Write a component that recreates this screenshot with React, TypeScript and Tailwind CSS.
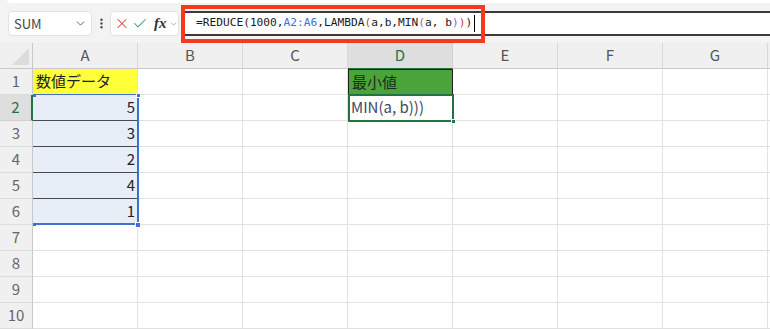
import React from 'react';
import { ChevronDown, X, Check, EllipsisVertical } from 'lucide-react';

const COLS = ['A', 'B', 'C', 'D', 'E', 'F', 'G'];
const ROWS = [1, 2, 3, 4, 5, 6, 7, 8, 9, 10];

const formula: [string, string][] = [
  ['=REDUCE(1000,', '#1a1a1a'],
  ['A2:A6', '#3b6fd4'],
  [',LAMBDA', '#1a1a1a'],
  ['(', '#b0463a'],
  ['a,b,MIN', '#1a1a1a'],
  ['(', '#9a55c4'],
  ['a, b', '#1a1a1a'],
  [')', '#9a55c4'],
  [')', '#b0463a'],
  [')', '#1a1a1a'],
];

const values: Record<number, string> = { 2: '5', 3: '3', 4: '2', 5: '4', 6: '1' };

function Toolbar() {
  return (
    <div className="relative h-[43px] bg-[#f3f3f3]">
      <div className="h-[3px] ml-[7px] bg-white rounded-bl-[4px]" />
      <div className="flex items-start pt-[8px]">
        <div className="ml-[8px] w-[84px] h-[25px] bg-white rounded-[4px] border border-[#e3e3e3] flex items-center justify-between pl-[5px] pr-[4px]">
          <span className="text-[13px] text-[#444]">SUM</span>
          <ChevronDown size={13} strokeWidth={1.6} className="text-[#555]" />
        </div>
        <div className="w-[18px] h-[25px] flex items-center justify-center">
          <EllipsisVertical size={13} strokeWidth={2.4} className="text-[#444]" />
        </div>
        <div className="w-[69px] h-[25px] bg-white rounded-[4px] border border-[#e3e3e3] flex items-center pl-[3px] gap-[2px]">
          <X size={17} strokeWidth={1.5} className="text-[#e0413a]" />
          <Check size={17} strokeWidth={1.5} className="text-[#3c9a5c]" />
          <span className="ml-[4px] text-[15px] italic font-bold text-[#333] leading-none" style={{ fontFamily: '"Liberation Serif", serif' }}>
            fx
          </span>
          <ChevronDown size={10} strokeWidth={1.6} className="text-[#888]" />
        </div>
        <div className="ml-[2px] flex-1 h-[25px] bg-white border-y-2 border-[#3a3a3a] flex items-center pl-[15px]">
          <span className="text-[11.2px] whitespace-pre" style={{ fontFamily: '"DejaVu Sans Mono", monospace' }}>
            {formula.map(([t, c], i) => (
              <span key={i} style={{ color: c }}>{t}</span>
            ))}
          </span>
          <span className="ml-[2px] w-[1px] h-[17px] bg-black" />
        </div>
      </div>
      {/* red annotation box */}
      <div className="absolute left-[181px] top-[5px] w-[304px] h-[38px] border-[4px] border-[#f5391f] pointer-events-none" />
    </div>
  );
}

function Sheet() {
  return (
    <div className="relative">
      <div className="grid grid-cols-[33px_repeat(7,105px)_2px] grid-rows-[26px_repeat(10,26px)]">
        {/* corner */}
        <div className="bg-[#f0f0f0] border-r border-b border-[#c8c8c8] flex items-end justify-end pr-[3px] pb-[3px]">
          <div className="w-0 h-0 border-l-[17px] border-l-transparent border-b-[17px] border-b-[#dcdcdc]" />
        </div>
        {COLS.map(c => (
          <div
            key={c}
            className={
              'flex items-center justify-center text-[15px] border-r border-b ' +
              (c === 'D'
                ? 'bg-[#dedede] text-[#217346] border-r-[#d0d0d0] border-b-[#217346]'
                : 'bg-[#f0f0f0] text-[#555] border-r-[#d8d8d8] border-b-[#c8c8c8]')
            }
          >
            {c}
          </div>
        ))}
        <div className="bg-[#f0f0f0] border-b border-[#c8c8c8]" />

        {ROWS.map(r => (
          <React.Fragment key={r}>
            <div
              className={
                'flex items-center justify-center text-[15px] border-b border-r ' +
                (r === 2
                  ? 'bg-[#dedede] text-[#217346] border-b-[#d0d0d0] border-r-[#217346] border-r-2'
                  : 'bg-[#f0f0f0] text-[#666] border-b-[#dcdcdc] border-r-[#c8c8c8]')
              }
            >
              {r}
            </div>
            {COLS.map(c => {
              if (c === 'A' && r === 1) {
                return (
                  <div key={c} className="bg-[#ffff3a] border-r border-b border-[#e1e1e1] flex items-center pl-[3px] text-[15px] text-[#222]">
                    数値データ
                  </div>
                );
              }
              if (c === 'A' && values[r]) {
                return (
                  <div
                    key={c}
                    className={
                      'bg-[#e8eef8] flex items-center justify-end pr-[2px] text-[15px] text-[#222] border-r border-r-[#e1e1e1] border-b ' +
                      (r < 6 ? 'border-b-[#4a4a4a]' : 'border-b-[#e1e1e1]')
                    }
                  >
                    {values[r]}
                  </div>
                );
              }
              if (c === 'D' && r === 1) {
                return (
                  <div key={c} className="bg-[#4ca33a] border border-[#1e1e1e] flex items-center pl-[3px] text-[15px] text-[#1e2a1a]">
                    最小値
                  </div>
                );
              }
              if (c === 'D' && r === 2) {
                return (
                  <div key={c} className="flex items-center pl-[3px] text-[15px] text-[#3e4a62] border-r border-b border-[#e1e1e1]">
                    MIN(a, b)))
                  </div>
                );
              }
              return <div key={c} className="border-r border-b border-[#e1e1e1]" />;
            })}
            <div className="border-b border-[#e1e1e1]" />
          </React.Fragment>
        ))}
      </div>

      {/* selection range A2:A6 */}
      <div className="absolute left-[33px] top-[51px] w-[106px] h-[131px] border-r-2 border-b-2 border-t border-[#3f6fd1] pointer-events-none" />
      <div className="absolute left-[33px] top-[51px] w-[3px] h-[3px] bg-[#3f6fd1]" />
      <div className="absolute left-[136px] top-[50px] w-[5px] h-[5px] bg-[#3f6fd1] border border-white" />
      <div className="absolute left-[33px] top-[180px] w-[3px] h-[3px] bg-[#3f6fd1]" />
      <div className="absolute left-[135px] top-[179px] w-[6px] h-[6px] bg-[#3f6fd1] border border-white" />

      {/* active cell D2 */}
      <div className="absolute left-[348px] top-[51px] w-[106px] h-[28px] border-2 border-[#217346] pointer-events-none" />
      <div className="absolute left-[451px] top-[76px] w-[5px] h-[5px] bg-[#217346] border border-white" />
    </div>
  );
}

export default function App() {
  return (
    <div
      className="w-[770px] h-[329px] overflow-hidden bg-white"
      style={{ fontFamily: '"Noto Sans CJK JP", "Noto Sans", sans-serif' }}
    >
      <Toolbar />
      <Sheet />
    </div>
  );
}
